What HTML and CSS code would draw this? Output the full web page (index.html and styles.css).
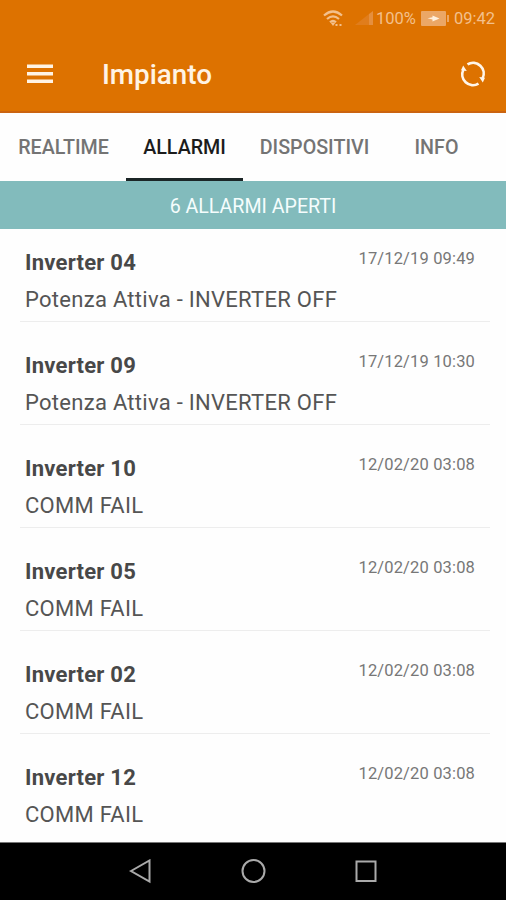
FILE: index.html
```html
<!DOCTYPE html>
<html lang="it">
<head>
    <meta charset="UTF-8">
    <meta name="viewport" content="width=device-width, initial-scale=1.0">
    <title>Impianto - Allarmi</title>
    <link rel="stylesheet" href="styles.css">
</head>
<body>
    <div class="app">
        <header class="header">
            <div class="status-bar">
                <svg class="wifi" width="20" height="17" viewBox="0 0 20 17" fill="none" stroke="currentColor" stroke-width="2.2">
                    <path d="M1 5.5Q10-2.5 19 5.5M4 9Q10 3.8 16 9M7 12.3Q10 9.6 13 12.3"/>
                    <path d="M7.5 12.5h5L10 16z" fill="currentColor" stroke="none"/>
                    <path d="M12.5 15h2M16.5 15h2" stroke-width="2"/>
                </svg>
                <svg class="signal" width="18" height="14" viewBox="0 0 18 14">
                    <path d="M0 14L14 3v11z" fill="#e07d1c"/>
                    <path d="M14 3l4-3v14h-4z" fill="#e58f3e"/>
                </svg>
                <span class="percent">100%</span>
                <svg class="battery" width="28" height="15" viewBox="0 0 28 15">
                    <rect width="25" height="15" rx="1" fill="currentColor"/>
                    <rect x="26" y="4" width="2" height="7" fill="currentColor"/>
                    <path d="M6.5 7.2l5-1V4.5l7 3-7 3V8.5z" fill="#fff0dc"/>
                </svg>
                <span class="time">09:42</span>
            </div>
            <div class="toolbar">
                <svg class="menu" width="26" height="20" viewBox="0 0 26 20" fill="#fff3e4">
                    <rect y="0.5" width="26" height="3.5"/>
                    <rect y="8" width="26" height="3.5"/>
                    <rect y="15.5" width="26" height="3.5"/>
                </svg>
                <h1>Impianto</h1>
                <svg class="refresh" width="26" height="26" viewBox="0 0 26 26" fill="none" stroke="#fff6ea" stroke-width="2.7">
                    <path d="M7.5 3.4A10.7 10.7 0 0 1 22.5 17.5"/>
                    <path d="M18.5 22.6A10.7 10.7 0 0 1 3.5 8.5"/>
                    <path d="M19.2 16l5.8.8-2.2 4.7zM6.8 10L1 9.2l2.200-4.7z" fill="#fff6ea" stroke="none"/>
                </svg>
            </div>
        </header>

        <nav class="tabs">
            <a class="tab realtime">REALTIME</a>
            <a class="tab allarmi active">ALLARMI</a>
            <a class="tab dispositivi">DISPOSITIVI</a>
            <a class="tab info">INFO</a>
        </nav>

        <div class="banner">6 ALLARMI APERTI</div>

        <ul class="alarms">
            <li class="alarm">
                <div class="alarm-head"><h2>Inverter 04</h2><time>17/12/19 09:49</time></div>
                <p>Potenza Attiva - INVERTER OFF</p>
            </li>
            <li class="alarm">
                <div class="alarm-head"><h2>Inverter 09</h2><time>17/12/19 10:30</time></div>
                <p>Potenza Attiva - INVERTER OFF</p>
            </li>
            <li class="alarm">
                <div class="alarm-head"><h2>Inverter 10</h2><time>12/02/20 03:08</time></div>
                <p>COMM FAIL</p>
            </li>
            <li class="alarm">
                <div class="alarm-head"><h2>Inverter 05</h2><time>12/02/20 03:08</time></div>
                <p>COMM FAIL</p>
            </li>
            <li class="alarm">
                <div class="alarm-head"><h2>Inverter 02</h2><time>12/02/20 03:08</time></div>
                <p>COMM FAIL</p>
            </li>
            <li class="alarm">
                <div class="alarm-head"><h2>Inverter 12</h2><time>12/02/20 03:08</time></div>
                <p>COMM FAIL</p>
            </li>
        </ul>

        <footer class="navbar">
            <svg width="24" height="26" viewBox="0 0 24 26"><path d="M3 12L21.5 1.5v21z"/></svg>
            <svg width="26" height="26" viewBox="0 0 26 26"><circle cx="13.5" cy="12" r="11"/></svg>
            <svg width="24" height="26" viewBox="0 0 24 26"><rect x="2.5" y="2.5" width="19" height="19.5"/></svg>
        </footer>
    </div>
</body>
</html>
```
FILE: styles.css
```css
body {
    margin: 0;
    background: #fefefe;
    font-family: Roboto, sans-serif;
    color: #484848;
}
.app {
    display: flex;
    flex-direction: column;
    height: 900px;
    overflow: hidden;
}
svg {
    display: block;
    flex-shrink: 0;
}
.header {
    height: 113px;
    box-sizing: border-box;
    background: #dd7200;
    border-bottom: 2px solid #cb6410;
}
.status-bar {
    display: flex;
    align-items: center;
    justify-content: flex-end;
    height: 36px;
    padding-right: 11px;
    color: #f3c08c;
    font-size: 16.5px;
}
.wifi {
    margin-right: 12px;
}
.signal {
    margin-right: 3px;
}
.percent {
    margin-right: 5px;
}
.battery {
    color: #eba766;
    margin-right: 5px;
}
.toolbar {
    display: flex;
    align-items: center;
    height: 75px;
    padding: 0 20px 0 27px;
}
.toolbar h1 {
    flex: 1;
    margin: 3px 0 0 49px;
    font-size: 27.8px;
    font-weight: 500;
    line-height: 30px;
    color: #fff3e4;
}
.tabs {
    display: flex;
    height: 68px;
    padding-left: 1px;
    font-size: 19.7px;
    font-weight: 500;
    line-height: 70px;
    color: #747474;
}
.tab {
    box-sizing: border-box;
    text-align: center;
    white-space: nowrap;
}
.realtime {
    width: 125px;
}
.allarmi {
    width: 117px;
}
.dispositivi {
    width: 143px;
}
.info {
    width: 101px;
}
.tab.active {
    color: #1c1c1c;
    border-bottom: 3px solid #1b2526;
}
.banner {
    height: 48px;
    line-height: 52px;
    background: #82bbbc;
    color: #f5fdfd;
    text-align: center;
    font-size: 19.6px;
}
.alarms {
    flex: 1;
    margin: 0;
    padding: 0 16px 0 20px;
    list-style: none;
}
.alarm {
    padding: 31px 15px 8px 5px;
    border-bottom: 1px solid #ededed;
}
.alarm:first-child {
    padding-top: 21px;
}
.alarm:last-child {
    border-bottom: none;
}
.alarm-head {
    display: flex;
    justify-content: space-between;
    margin-bottom: 11px;
}
.alarm h2 {
    margin: 0;
    font-size: 22px;
    font-weight: 700;
    line-height: 26px;
    letter-spacing: 0.25px;
}
.alarm time {
    margin-top: -1px;
    font-size: 16.5px;
    line-height: 20px;
    letter-spacing: 0.15px;
    color: #777;
}
.alarm p {
    margin: 0;
    font-size: 22px;
    line-height: 26px;
    letter-spacing: 0.28px;
    color: #555;
}
.navbar {
    display: flex;
    align-items: center;
    justify-content: center;
    gap: 88px;
    height: 58px;
    flex-shrink: 0;
    box-sizing: border-box;
    border-top: 1px solid #777;
    background: #000;
    fill: none;
    stroke: #aaa;
    stroke-width: 2;
}
```
